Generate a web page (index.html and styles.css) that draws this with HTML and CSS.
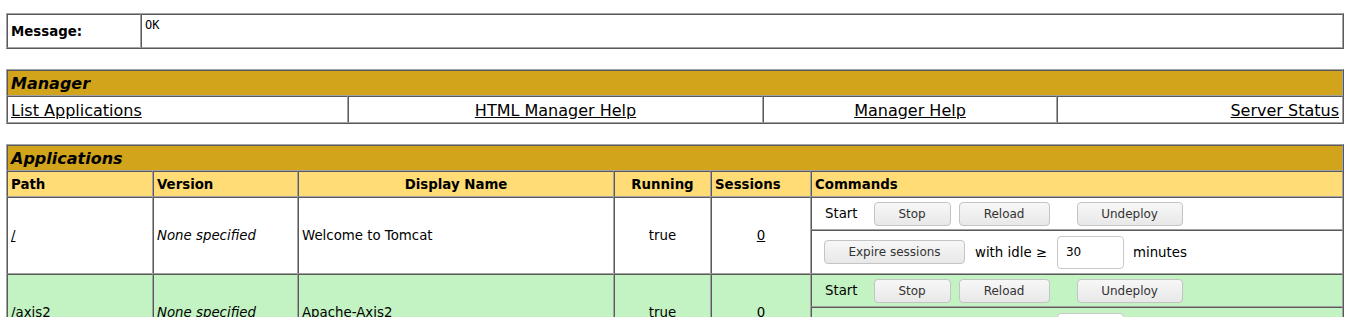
FILE: index.html
```html
<!DOCTYPE html>
<html>
<head>
<meta charset="utf-8">
<title>Tomcat Web Application Manager</title>
<link rel="stylesheet" href="styles.css">
</head>
<body>
<div class="page">
  <table class="tbl msg">
    <tr>
      <td class="msg-label">Message:</td>
      <td class="msg-text"><pre>OK</pre></td>
    </tr>
  </table>

  <table class="tbl mgr">
    <tr><td class="title" colspan="4">Manager</td></tr>
    <tr class="links">
      <td class="row-left w-list"><a href="#">List Applications</a></td>
      <td class="row-center w-html"><a href="#">HTML Manager Help</a></td>
      <td class="row-center w-help"><a href="#">Manager Help</a></td>
      <td class="row-right"><a href="#">Server Status</a></td>
    </tr>
  </table>

  <table class="tbl apps">
    <tr><td class="title" colspan="6">Applications</td></tr>
    <tr class="head">
      <td class="hl c-path">Path</td>
      <td class="hl c-ver">Version</td>
      <td class="hc c-name">Display Name</td>
      <td class="hc c-run">Running</td>
      <td class="hl c-ses">Sessions</td>
      <td class="hl">Commands</td>
    </tr>

    <tr class="app">
      <td class="cell" rowspan="2"><a href="#">/</a></td>
      <td class="cell" rowspan="2"><i>None specified</i></td>
      <td class="cell" rowspan="2">Welcome to Tomcat</td>
      <td class="cell center" rowspan="2">true</td>
      <td class="cell center" rowspan="2"><a href="#">0</a></td>
      <td class="cmd1">
        <div class="line">
          <span class="start">Start</span>
          <button class="btn b-stop">Stop</button>
          <button class="btn b-reload">Reload</button>
          <button class="btn b-undeploy">Undeploy</button>
        </div>
      </td>
    </tr>
    <tr class="app">
      <td class="cmd2">
        <div class="line">
          <button class="btn b-expire">Expire sessions</button>
          <span class="idle">with idle ≥</span>
          <input class="idle-input" type="text" value="30">
          <span class="minutes">minutes</span>
        </div>
      </td>
    </tr>

    <tr class="app alt">
      <td class="cell" rowspan="2">/axis2</td>
      <td class="cell" rowspan="2"><i>None specified</i></td>
      <td class="cell" rowspan="2">Apache-Axis2</td>
      <td class="cell center" rowspan="2">true</td>
      <td class="cell center" rowspan="2">0</td>
      <td class="cmd1">
        <div class="line">
          <span class="start">Start</span>
          <button class="btn b-stop">Stop</button>
          <button class="btn b-reload">Reload</button>
          <button class="btn b-undeploy">Undeploy</button>
        </div>
      </td>
    </tr>
    <tr class="app alt">
      <td class="cmd2">
        <div class="line">
          <button class="btn b-expire">Expire sessions</button>
          <span class="idle">with idle ≥</span>
          <input class="idle-input" type="text" value="30">
          <span class="minutes">minutes</span>
        </div>
      </td>
    </tr>
  </table>
</div>
</body>
</html>
```
FILE: styles.css
```css
html, body {
  margin: 0;
  padding: 0;
  background: #ffffff;
}

body {
  font-family: "DejaVu Sans", Verdana, sans-serif;
  font-size: 16px;
  color: #000;
}

.page {
  padding: 13px 8px 0 6px;
}

a {
  color: #000;
  text-decoration: underline;
}

.tbl {
  width: 100%;
  border-collapse: separate;
  border-spacing: 0;
  border: 1px solid;
  border-color: #a3a3a3 #5a5a5a #5a5a5a #a3a3a3;
  margin-bottom: 20px;
}

.tbl td {
  box-sizing: border-box;
  border: 1px solid;
  border-color: #5a5a5a #a3a3a3 #a3a3a3 #5a5a5a;
  padding: 0 3px;
  vertical-align: middle;
  text-align: left;
}

/* Message */
.msg td { height: 34px; }
.msg-label {
  width: 134px;
  font-size: 13.333px;
  font-weight: bold;
}
.tbl .msg-text {
  vertical-align: top;
  padding-top: 3px;
}
.msg-text pre {
  margin: 0;
  font-family: "DejaVu Sans Mono", monospace;
  font-size: 12px;
  line-height: 14px;
}

/* Titles */
.tbl .title {
  height: 26px;
  background: #d2a41c;
  font-weight: bold;
  font-style: italic;
  font-size: 16px;
}

/* Manager links */
.links td { height: 27px; font-size: 16px; padding-top: 1px; }
.w-list { width: 341px; }
.w-html { width: 415px; }
.w-help { width: 294px; }
.tbl .row-center { text-align: center; }
.tbl .row-right { text-align: right; }

/* Applications */
.head td {
  height: 26px;
  background: #ffdc75;
  font-size: 13.333px;
  font-weight: bold;
}
.tbl .hc { text-align: center; }
.c-path { width: 146px; }
.c-ver { width: 145px; }
.c-name { width: 316px; }
.c-run { width: 97px; }
.c-ses { width: 100px; }

.app td {
  background: #ffffff;
  font-size: 13.333px;
}
.app.alt td {
  background: #c3f3c3;
}
.tbl .center { text-align: center; }

.tbl .cmd1 { height: 33px; }
.tbl .cmd2 { height: 44px; }

.line {
  display: flex;
  align-items: center;
}

.start { margin-left: 10px; }

.btn {
  box-sizing: border-box;
  height: 24px;
  padding: 0;
  font-family: "DejaVu Sans", Verdana, sans-serif;
  font-size: 12px;
  color: #333;
  background: linear-gradient(#f7f7f7, #e8e8e8);
  border: 1px solid #c4c4c4;
  border-radius: 4px;
}

.b-stop { width: 77px; margin-left: 16px; }
.b-reload { width: 91px; margin-left: 8px; }
.b-undeploy { width: 106px; margin-left: 27px; }
.b-expire { width: 141px; margin-left: 9px; }

.idle { margin-left: 10px; }

.idle-input {
  box-sizing: border-box;
  width: 67px;
  height: 33px;
  margin-left: 10px;
  padding: 0 0 0 8px;
  font-family: "DejaVu Sans", Verdana, sans-serif;
  font-size: 12px;
  color: #000;
  background: #fff;
  border: 1px solid #c8c8c8;
  border-radius: 4px;
}

.minutes { margin-left: 9px; }
```
